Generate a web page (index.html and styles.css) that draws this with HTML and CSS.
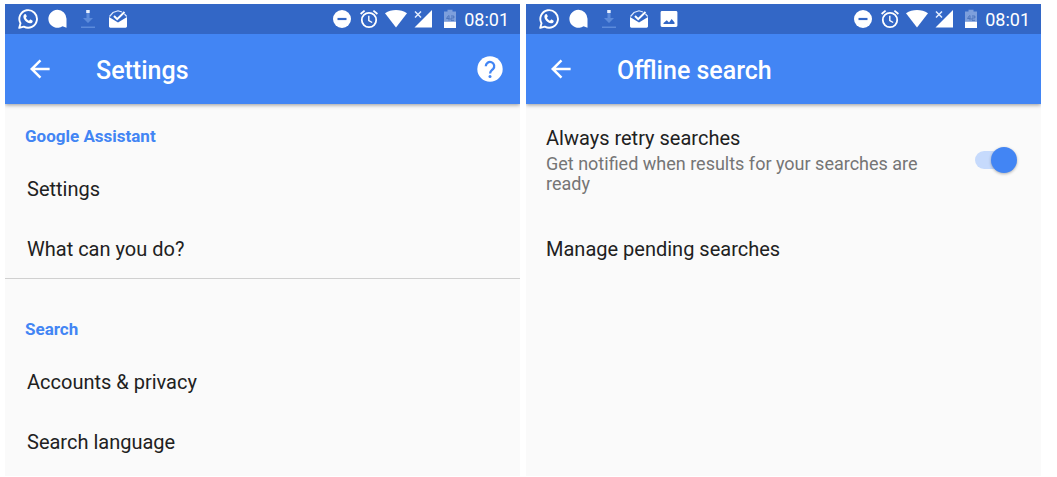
FILE: index.html
```html
<!DOCTYPE html>
<html lang="en">
<head>
<meta charset="utf-8">
<title>Settings</title>
<link rel="stylesheet" href="styles.css">
</head>
<body>
<svg class="sprite" aria-hidden="true">
  <symbol id="i-whatsapp" viewBox="0 0 20 20">
    <path d="M1.2 18.9l1.3-4.6A8.8 8.8 0 1 1 5.8 17.6z" fill="none" stroke="#fff" stroke-width="1.9" stroke-linejoin="round"/>
    <path d="M6.6 5.3c.5-.4 1.1-.3 1.4.3l.7 1.5c.1.3 0 .6-.2.9l-.6.8c.7 1.4 1.700 2.300 3.100 2.900l.9-.9c.2-.2.5-.3.8-.2l1.600.8c.5.3.5.8.3 1.300-.4 1.100-1.500 1.700-2.700 1.500-3.400-.5-6.300-3.400-6.500-6.500 0-1 .4-1.900 1.200-2.400z" fill="#fff"/>
  </symbol>
  <symbol id="i-chat" viewBox="0 0 20 20">
    <path d="M9.500.8a9 9 0 0 1 9 9v9l-4-1.600A9 9 0 1 1 9.500.8z" fill="#fff"/>
  </symbol>
  <symbol id="i-download" viewBox="0 0 20 20">
    <path d="M8.500 4h3v5H15l-5 5-5-5h3.500zM3 17.500h14v1.500H3z" fill="#5c8bdb"/>
    <path d="M8.200 1h3.500v3H8.200z" fill="#e9f1ff"/>
  </symbol>
  <symbol id="i-inbox" viewBox="0 0 20 20">
    <path d="M1 8v9.300c0 .8.600 1.400 1.400 1.400h15.200c.8 0 1.400-.6 1.400-1.400V8l-9 5.500z" fill="#fff"/>
    <path d="M1.500 7.500L5 3.500 10 1.800l4 1.200M16.500 5l2.200 2.500" fill="none" stroke="#dfeaff" stroke-width="1.200"/>
    <path d="M6 7l3.200 3.200L16.500 3" fill="none" stroke="#fff" stroke-width="2"/>
  </symbol>
  <symbol id="i-image" viewBox="0 0 20 20">
    <path fill-rule="evenodd" d="M3 2h14c.8 0 1.400.6 1.400 1.400v13.200c0 .8-.6 1.400-1.400 1.400H3c-.8 0-1.400-.6-1.400-1.400V3.400C1.600 2.600 2.200 2 3 2zM4.500 15h11v-1.500l-2.800-3.500-2.700 3.500-2.200-2.200L4.500 14z" fill="#fff"/>
  </symbol>
  <symbol id="i-dnd" viewBox="0 0 22 22">
    <circle cx="11" cy="11" r="9" fill="#fff"/><path d="M6.500 9.900h9v2.200h-9z" fill="#3367c6"/>
  </symbol>
  <symbol id="i-alarm" viewBox="0 0 22 22" fill="none" stroke="#fff">
    <circle cx="11" cy="12" r="7.200" stroke-width="1.800"/>
    <path d="M2.600 6l4-3.400M19.400 6l-4-3.400" stroke-width="1.800"/>
    <path d="M10.800 7.800v4.700l3.400 2" stroke-width="1.400"/>
  </symbol>
  <symbol id="i-wifi" viewBox="0 0 22 22">
    <path d="M0 5.200C6.500 1 15.500 1 22 5.200L11 19.500z" fill="#fff"/>
  </symbol>
  <symbol id="i-signal" viewBox="0 0 22 22">
    <path d="M20 2v17.500H2.500z" fill="#fff"/><path d="M3 3.500l6 6M9 3.500l-6 6" stroke="#e4eeff" stroke-width="1.500"/>
  </symbol>
  <symbol id="i-battery" viewBox="0 0 22 22">
    <path d="M8.500 1.800h5v1.700H17V13H5V3.500h3.500z" fill="#7d9fdc"/>
    <path d="M5 13.500h12V20H5z" fill="#fff"/>
    <path d="M9.500 7.500l-2 3h3M10 7.500v5M12 8h2.800v2H12v2.300h3" stroke="#4c74bd" fill="none"/>
  </symbol>
  <symbol id="i-back" viewBox="0 0 24 24">
    <path d="M22.500 12H3.500M12.500 2.500L3 12l9.500 9.500" fill="none" stroke="#fff" stroke-width="2.700"/>
  </symbol>
  <symbol id="i-help" viewBox="0 0 26 26">
    <circle cx="13" cy="13" r="12.700" fill="#fff"/>
    <path d="M8.800 10.200a4.200 4.200 0 1 1 7.200 2.900c-1.700 1.600-2.900 2.100-2.900 4.400" fill="none" stroke="#4285f4" stroke-width="2.300"/>
    <circle cx="13" cy="20.500" r="1.500" fill="#4285f4"/>
  </symbol>
</svg>

<main class="screens">
  <section class="phone">
    <div class="status">
      <div class="notifications">
        <svg class="note"><use href="#i-whatsapp"/></svg>
        <svg class="note"><use href="#i-chat"/></svg>
        <svg class="note"><use href="#i-download"/></svg>
        <svg class="note"><use href="#i-inbox"/></svg>
      </div>
      <div class="system">
        <div class="indicators">
          <svg class="sys"><use href="#i-dnd"/></svg>
          <svg class="sys"><use href="#i-alarm"/></svg>
          <svg class="sys"><use href="#i-wifi"/></svg>
          <svg class="sys"><use href="#i-signal"/></svg>
          <svg class="sys"><use href="#i-battery"/></svg>
        </div>
        <time class="clock">08:01</time>
      </div>
    </div>
    <header class="appbar">
      <button class="icon-button" type="button" aria-label="Back"><svg class="back"><use href="#i-back"/></svg></button>
      <h1 class="title">Settings</h1>
      <button class="icon-button" type="button" aria-label="Help"><svg class="help"><use href="#i-help"/></svg></button>
    </header>
    <div class="group">
      <h2 class="heading">Google Assistant</h2>
      <a class="row" href="#">Settings</a>
      <a class="row row-last" href="#">What can you do?</a>
    </div>
    <div class="group">
      <h2 class="heading">Search</h2>
      <a class="row" href="#">Accounts &amp; privacy</a>
      <a class="row" href="#">Search language</a>
    </div>
  </section>

  <section class="phone">
    <div class="status">
      <div class="notifications">
        <svg class="note"><use href="#i-whatsapp"/></svg>
        <svg class="note"><use href="#i-chat"/></svg>
        <svg class="note"><use href="#i-download"/></svg>
        <svg class="note"><use href="#i-inbox"/></svg>
        <svg class="note"><use href="#i-image"/></svg>
      </div>
      <div class="system">
        <div class="indicators">
          <svg class="sys"><use href="#i-dnd"/></svg>
          <svg class="sys"><use href="#i-alarm"/></svg>
          <svg class="sys"><use href="#i-wifi"/></svg>
          <svg class="sys"><use href="#i-signal"/></svg>
          <svg class="sys"><use href="#i-battery"/></svg>
        </div>
        <time class="clock">08:01</time>
      </div>
    </div>
    <header class="appbar">
      <button class="icon-button" type="button" aria-label="Back"><svg class="back"><use href="#i-back"/></svg></button>
      <h1 class="title">Offline search</h1>
    </header>
    <div class="option">
      <label class="option-text" for="retry">
        <span class="option-name">Always retry searches</span>
        <span class="option-note">Get notified when results for your searches are ready</span>
      </label>
      <input class="switch" type="checkbox" role="switch" id="retry" checked>
    </div>
    <a class="row row-wide" href="#">Manage pending searches</a>
  </section>
</main>
</body>
</html>
```
FILE: styles.css
```css
* {
  box-sizing: border-box;
}

body {
  margin: 0;
  background: #fff;
  color: #212121;
  font-family: Roboto, "Liberation Sans", sans-serif;
  font-size: 20px;
}

.sprite {
  display: none;
}

.screens {
  display: grid;
  grid-template-columns: 1fr 1fr;
  gap: 6px;
  min-height: 100vh;
  padding: 4px 16px 1px 5px;
}

.phone {
  background: #fafafa;
}

.status {
  display: flex;
  align-items: center;
  justify-content: space-between;
  height: 30px;
  padding: 0 11px 0 13px;
  background: #3367c6;
}

.notifications {
  display: flex;
  gap: 10px;
}

.note {
  width: 20px;
  height: 20px;
}

.system {
  display: flex;
  align-items: center;
  gap: 3px;
}

.indicators {
  display: flex;
  gap: 5px;
}

.sys {
  width: 22px;
  height: 22px;
}

.clock {
  padding-top: 2px;
  color: #fff;
  font-size: 18px;
  line-height: 22px;
}

.appbar {
  display: flex;
  align-items: center;
  height: 70px;
  padding: 0 17px 0 24px;
  background: #4285f4;
  box-shadow: 0 1px 4px rgba(0, 0, 0, 0.4);
  clip-path: inset(0 0 -6px 0);
}

.icon-button {
  display: flex;
  padding: 0;
  border: 0;
  background: none;
}

.back {
  width: 22px;
  height: 22px;
}

.help {
  width: 26px;
  height: 26px;
}

.title {
  flex: 1;
  margin: 0 0 0 45px;
  padding-top: 3px;
  color: #fff;
  font-size: 25px;
  font-weight: 500;
  line-height: 30px;
}

.group + .group {
  padding-top: 18px;
}

.heading {
  margin: 0;
  padding: 22px 20px 13px;
  color: #4285f4;
  font-size: 17px;
  font-weight: 700;
  line-height: 20px;
}

.row {
  display: flex;
  align-items: center;
  height: 60px;
  padding: 0 22px;
  color: inherit;
  text-decoration: none;
}

.row-last {
  border-bottom: 1px solid #d0d0d0;
}

.row-wide {
  height: 66px;
  padding: 0 20px;
}

.option {
  display: flex;
  align-items: center;
  gap: 40px;
  padding: 22px 24px 22px 20px;
}

.option-text {
  flex: 1;
}

.option-name,
.option-note {
  display: block;
}

.option-name {
  line-height: 24px;
}

.option-note {
  padding-top: 4px;
  color: #757575;
  font-size: 18px;
  line-height: 20px;
}

.switch {
  display: flex;
  align-items: center;
  justify-content: flex-end;
  width: 36px;
  height: 18px;
  margin: 0 6px 0 0;
  appearance: none;
  background: #c6dafc;
  border-radius: 9px;
}

.switch::before {
  content: "";
  flex: none;
  width: 26px;
  height: 26px;
  margin-right: -6px;
  border-radius: 50%;
  background: #4285f4;
  box-shadow: 0 1px 3px rgba(0, 0, 0, 0.3);
}
```
